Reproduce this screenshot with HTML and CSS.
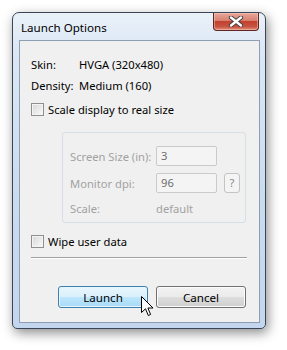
FILE: index.html
```html
<!DOCTYPE html>
<html lang="en">
<head>
  <meta charset="UTF-8" />
  <title>Launch Options</title>
  <link rel="stylesheet" href="styles.css">
</head>
<body>
  <div class="desk">
    <div class="window">
      <div class="titlebar">
        <span class="title">Launch Options</span>
        <button class="close" aria-label="Close">
          <svg width="16" height="11" viewBox="0 0 16 11">
            <path d="M3 1.5 L13 9.5 M13 1.5 L3 9.5" stroke="#3b3b3b" stroke-width="4.2" stroke-linecap="round" />
            <path d="M3 1.5 L13 9.5 M13 1.5 L3 9.5" stroke="#ffffff" stroke-width="2.4" stroke-linecap="round" />
          </svg>
        </button>
      </div>

      <div class="client">
        <div class="row"><span class="key">Skin:</span><span>HVGA (320x480)</span></div>
        <div class="row"><span class="key">Density:</span><span>Medium (160)</span></div>

        <label class="check scale"><span class="box"></span>Scale display to real size</label>

        <div class="group">
          <div class="field">
            <span class="flabel">Screen Size (in):</span>
            <span class="input">3</span>
          </div>
          <div class="field">
            <span class="flabel">Monitor dpi:</span>
            <span class="input">96</span>
            <span class="help">?</span>
          </div>
          <div class="field last">
            <span class="flabel">Scale:</span>
            <span>default</span>
          </div>
        </div>

        <label class="check wipe"><span class="box"></span>Wipe user data</label>

        <div class="sep"></div>

        <div class="actions">
          <button class="btn primary">Launch</button>
          <button class="btn">Cancel</button>
        </div>
      </div>
    </div>

    <svg class="cursor" width="13" height="21" viewBox="0 0 13 21">
      <path d="M0.5 0.5 L0.5 16.5 L4.5 12.8 L7.3 19.5 L9.6 18.5 L6.9 12 L12 12 Z" fill="#ffffff" stroke="#000000" stroke-width="1" stroke-linejoin="miter" />
    </svg>
  </div>
</body>
</html>
```

FILE: styles.css
```css
* { margin: 0; padding: 0; box-sizing: border-box; }
html, body {
  width: 100%;
  height: 100%;
  background: #ffffff;
  overflow: hidden;
  font-family: "Noto Sans", "Open Sans", sans-serif;
  font-size: 11.2px;
  color: #000;
  white-space: nowrap;
}

.desk {
  position: relative;
  width: 287px;
  height: 350px;
  padding: 12px 0 0 12px;
}

.window {
  width: 254px;
  height: 317px;
  border: 1px solid #3a4656;
  border-radius: 7px 7px 5px 5px;
  background: linear-gradient(to bottom, #eaf1f9 0%, #dbe7f4 12%, #c9dbef 60%, #c3d6ee 100%);
  padding: 0 5px 5px 6px;
  box-shadow: 2px 4px 12px rgba(0, 0, 0, 0.45);
  display: flex;
  flex-direction: column;
}

.titlebar {
  height: 27px;
  display: flex;
  justify-content: space-between;
  align-items: flex-start;
  flex-shrink: 0;
}

.title {
  margin: 6px 0 0 2px;
  line-height: 18px;
  font-size: 11.6px;
  color: #000;
}

.close {
  width: 46px;
  height: 18px;
  margin-right: 1px;
  border: 1px solid #5e2620;
  border-top: none;
  border-radius: 0 0 4px 4px;
  background: linear-gradient(to bottom, #e7a79b 0%, #d7806f 45%, #c4412f 50%, #c75441 80%, #e0917d 100%);
  box-shadow: inset 0 0 0 1px rgba(255, 210, 200, 0.45);
  display: flex;
  align-items: center;
  justify-content: center;
}

.client {
  flex: 1;
  border: 1px solid #8f9fb3;
  background: #f0f0f0;
  padding: 13px 12px 0 11px;
}

.row {
  display: flex;
  height: 21px;
  line-height: 21px;
}

.key { width: 48px; flex-shrink: 0; }

.check {
  display: flex;
  align-items: center;
  height: 15px;
  gap: 4px;
}

.check.scale { margin-top: 6px; }
.check.wipe { margin-top: 11px; }

.box {
  width: 13px;
  height: 13px;
  flex-shrink: 0;
  border: 1px solid #8e8f8f;
  background: linear-gradient(135deg, #d8d8d8 0%, #ececec 60%, #f9f9f9 100%);
  box-shadow: inset 0 0 0 1px #f4f4f4;
}

.group {
  margin: 15px 1px 0 31px;
  height: 91px;
  border: 1px solid #d5dfe5;
  border-radius: 3px;
  padding: 13px 0 0 7px;
  color: #a2a2a2;
}

.field {
  display: flex;
  align-items: center;
  height: 20px;
  gap: 7px;
  margin-bottom: 7px;
}

.field.last { margin-top: -2px; }

.flabel { width: 79px; flex-shrink: 0; }

.input {
  width: 61px;
  height: 20px;
  border: 1px solid #cacaca;
  border-radius: 2px;
  background: #f4f4f4;
  padding-left: 4px;
  line-height: 18px;
  color: #6d6d6d;
}

.help {
  width: 16px;
  height: 20px;
  border: 1px solid #c3c3c3;
  border-radius: 3px;
  background: #f4f4f4;
  text-align: center;
  line-height: 18px;
  color: #8a8a8a;
}

.sep {
  margin-top: 8px;
  height: 2px;
  background: #a0a0a0;
  border-bottom: 1px solid #ffffff;
}

.actions {
  margin-top: 27px;
  display: flex;
  justify-content: flex-end;
  gap: 8px;
  padding-right: 1px;
}

.btn {
  width: 90px;
  height: 22px;
  border: 1px solid #707070;
  border-radius: 3px;
  font-family: inherit;
  font-size: 11.6px;
  color: #000;
  background: linear-gradient(to bottom, #f2f2f2 0%, #ebebeb 50%, #dddddd 51%, #cfcfcf 100%);
  box-shadow: inset 0 0 0 1px #fcfcfc;
}

.btn.primary {
  border-color: #3c7fb1;
  background: linear-gradient(to bottom, #eaf6fd 0%, #d9f0fc 50%, #bee6fd 51%, #a7d9f5 100%);
  box-shadow: inset 0 0 0 1px #e8f5fd;
}

.cursor {
  position: absolute;
  left: 141px;
  top: 296px;
}
```
